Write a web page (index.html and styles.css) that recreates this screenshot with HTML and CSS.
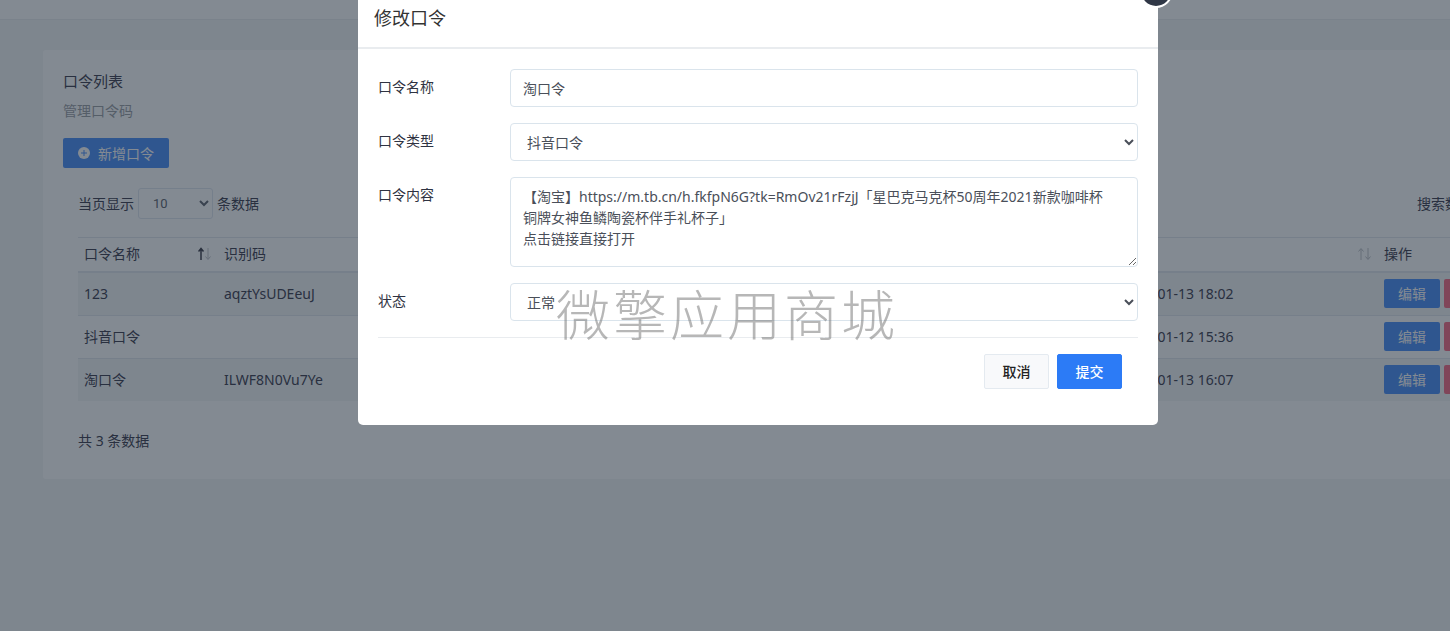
FILE: index.html
```html
<!DOCTYPE html>
<html lang="zh-CN">
<head>
<meta charset="utf-8">
<title>口令列表</title>
<link rel="stylesheet" href="styles.css">
</head>
<body>
<div class="topbar"></div>
<main class="card">
  <h1 class="card-title">口令列表</h1>
  <p class="card-sub">管理口令码</p>
  <button class="btn-add" type="button">
    <svg width="12" height="12" viewBox="0 0 12 12" aria-hidden="true"><circle cx="6" cy="6" r="6" fill="#fff"/><path d="M6 3v6M3 6h6" stroke="#5797f9" stroke-width="1"/></svg>
    <span>新增口令</span>
  </button>
  <div class="list">
    <div class="tools">
      <label class="length">当页显示 <select class="length-select"><option>10</option></select> 条数据</label>
      <label class="search">搜索数据 <input type="search" class="search-input"></label>
    </div>
    <table class="table">
      <colgroup><col class="col-name"><col><col class="col-time"><col class="col-action"></colgroup>
      <thead>
        <tr>
          <th><div class="head">口令名称<svg class="sort" width="14" height="14" viewBox="0 0 14 14" fill="none" aria-hidden="true"><path d="M3 13V2M.5 4.500L3 1.500l2.500 3" stroke="#4a4a55" stroke-width="1.500"/><path d="M10 1v11M7.500 9.500L10 12.500l2.500-3" stroke="#c4c5cb"/></svg></div></th>
          <th>识别码</th>
          <th><div class="head">时间<svg class="sort" width="14" height="14" viewBox="0 0 14 14" fill="none" aria-hidden="true"><path d="M3 13V2M.5 4.500L3 1.500l2.500 3M10 1v11M7.500 9.500L10 12.500l2.500-3" stroke="#c4c5cb"/></svg></div></th>
          <th>操作</th>
        </tr>
      </thead>
      <tbody>
        <tr><td>123</td><td>aqztYsUDEeuJ</td><td class="time">2022-01-13 18:02</td><td><div class="acts"><button class="btn-sm" type="button">编辑</button><button class="btn-sm btn-del" type="button">删除</button></div></td></tr>
        <tr><td>抖音口令</td><td></td><td class="time">2022-01-12 15:36</td><td><div class="acts"><button class="btn-sm" type="button">编辑</button><button class="btn-sm btn-del" type="button">删除</button></div></td></tr>
        <tr><td>淘口令</td><td>ILWF8N0Vu7Ye</td><td class="time">2022-01-13 16:07</td><td><div class="acts"><button class="btn-sm" type="button">编辑</button><button class="btn-sm btn-del" type="button">删除</button></div></td></tr>
      </tbody>
    </table>
    <p class="total">共 3 条数据</p>
  </div>
</main>

<div class="overlay">
  <section class="modal" role="dialog" aria-labelledby="modal-title">
    <button class="close" type="button" aria-label="关闭"></button>
    <header class="modal-head"><h2 class="modal-title" id="modal-title">修改口令</h2></header>
    <form class="form">
      <div class="field"><label for="name">口令名称</label><input class="control" id="name" type="text" value="淘口令"></div>
      <div class="field"><label for="type">口令类型</label><select class="control" id="type"><option>抖音口令</option></select></div>
      <div class="field"><label for="content">口令内容</label><textarea class="control area" id="content">【淘宝】https://m.tb.cn/h.fkfpN6G?tk=RmOv21rFzjJ「星巴克马克杯50周年2021新款咖啡杯铜牌女神鱼鳞陶瓷杯伴手礼杯子」
点击链接直接打开</textarea></div>
      <div class="field"><label for="state">状态</label><select class="control" id="state"><option>正常</option></select></div>
      <div class="actions"><button class="btn btn-cancel" type="button">取消</button><button class="btn btn-submit" type="button">提交</button></div>
    </form>
    <div class="watermark">微擎应用商城</div>
  </section>
</div>
</body>
</html>
```
FILE: styles.css
```css
* { box-sizing: border-box; }
html, body { height: 100%; }
body {
  margin: 0;
  overflow: hidden;
  background: #f5f6f7;
  color: #4b4b5a;
  font: 14px/21px "Noto Sans", "Noto Sans CJK SC", sans-serif;
}
button, input, select, textarea { font: inherit; color: inherit; }
h1, h2, p { margin: 0; font-weight: 400; }

.topbar { height: 20px; background: #fff; border-bottom: 1px solid #eceef1; }
.card {
  margin: 30px -110px 0 43px;
  padding: 20px;
  background: #fff;
  border-radius: 3px;
}
.card-title { font-size: 15px; line-height: 22px; }
.card-sub { margin-top: 8px; color: #a3a6ab; }
.btn-add {
  display: flex;
  align-items: center;
  gap: 8px;
  height: 30px;
  margin-top: 17px;
  padding: 0 15px;
  border: 0;
  border-radius: 2px;
  background: #5797f9;
  color: #fff;
}
.list { padding: 20px 15px 8px; }
.tools { display: flex; justify-content: space-between; }
.length, .search { display: flex; align-items: center; gap: 4px; }
.length-select {
  width: 75px;
  height: 31px;
  padding: 4px 0 4px 10px;
  border: 1px solid #e2e8f0;
  border-radius: 3px;
  background: #fff;
  color: #6b6f78;
  font-family: Roboto, sans-serif;
  font-size: 13px;
}
.search { width: 108px; flex: none; white-space: nowrap; }
.search-input { width: 48px; height: 31px; border: 1px solid #e2e8f0; }

.table { width: 100%; margin-top: 18px; table-layout: fixed; border-spacing: 0; border-top: 1px solid #e5e8ef; }
.col-name { width: 140px; }
.col-time { width: 263px; }
.col-action { width: 147px; }
.table th { height: 35px; padding: 0 6px 2px; border-bottom: 2px solid #e5e8ef; font-weight: 400; text-align: left; }
.head { display: flex; align-items: center; justify-content: space-between; }
.table td { height: 43px; padding: 0 6px 1px; border-top: 1px solid #e5e8ef; }
.table tr:first-child td { height: 42px; border-top: 0; }
.table tbody tr:nth-child(odd) { background: #f5f6f7; }
.acts { display: flex; gap: 4px; }
.btn-sm { width: 56px; height: 29px; padding: 0; border: 0; border-radius: 2px; background: #5797f9; color: #fff; flex: none; }
.btn-del { background: #f9758c; }
.total { margin-top: 29px; }

.overlay {
  position: fixed;
  inset: 0 -66px 0 0;
  background: rgba(7, 21, 37, .5);
}
.modal {
  position: relative;
  width: 100%;
  max-width: 800px;
  margin: -13px auto 0;
  border-radius: 5px;
  background: #fff;
  color: #2f3342;
}
.close {
  position: absolute;
  top: -13px;
  right: -15px;
  width: 34px;
  height: 34px;
  border: 2px solid #fff;
  border-radius: 50%;
  background: #2f3746;
}
.modal-head { padding: 17px 16px 15px; border-bottom: 2px solid #e9ecef; }
.modal-title { font-size: 18px; line-height: 28px; color: #333; }
.form { padding: 20px 20px 36px; }
.field { display: flex; align-items: flex-start; margin-bottom: 16px; }
.field label { flex: 0 0 132px; padding-top: 7px; }
.control {
  flex: 1;
  min-width: 0;
  height: 38px;
  padding: 6px 12px;
  border: 1px solid #dae4ec;
  border-radius: 4px;
  background: #fff;
  color: #4a4f59;
}
.area { height: 90px; padding: 8px 24px 8px 12px; resize: vertical; overflow: hidden; }
.actions { display: flex; justify-content: flex-end; gap: 8px; padding: 16px 16px 0; border-top: 1px solid #e9ecef; }
.btn { width: 65px; height: 35px; padding: 0; border: 1px solid #e4eaf0; border-radius: 2px; font-weight: 500; }
.btn-cancel { background: #f8f9fb; color: #222; }
.btn-submit { border-color: #2c7bf6; background: #2c7bf6; color: #fff; }
.watermark {
  position: absolute;
  left: 198px;
  bottom: 72px;
  font: 300 54px/80px "Noto Sans CJK SC", sans-serif;
  letter-spacing: 3px;
  color: rgba(112, 112, 112, .5);
  pointer-events: none;
}
```
